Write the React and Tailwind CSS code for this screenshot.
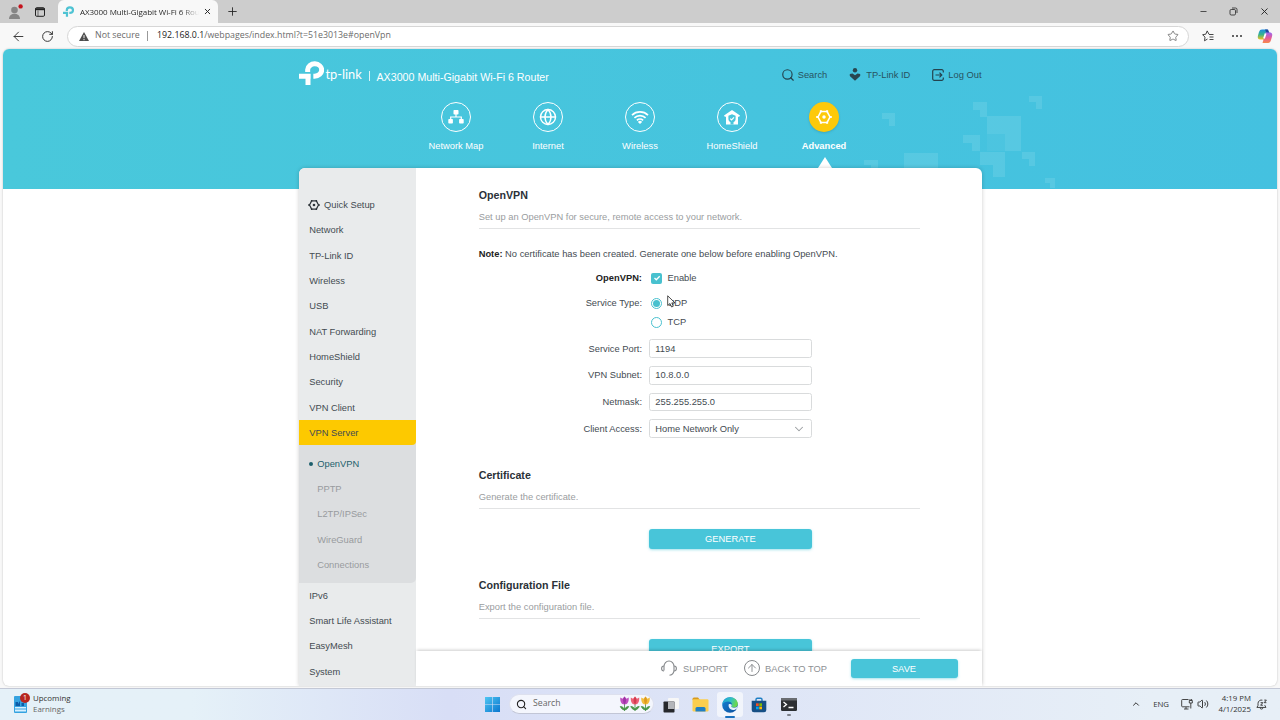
import {
  ArrowLeft,
  ArrowUp,
  ChevronDown,
  ChevronUp,
  Globe,
  Minus,
  Plus,
  RotateCw,
  Search,
  Star,
  Volume2,
  X,
} from 'lucide-react'

const SIDEBAR_TOP = [
  'Network',
  'TP-Link ID',
  'Wireless',
  'USB',
  'NAT Forwarding',
  'HomeShield',
  'Security',
  'VPN Client',
]
const VPN_PAGES = ['OpenVPN', 'PPTP', 'L2TP/IPSec', 'WireGuard', 'Connections']
const SIDEBAR_BOTTOM = ['IPv6', 'Smart Life Assistant', 'EasyMesh', 'System']

function TpMark({ className }) {
  return (
    <svg viewBox="0 0 75 72" className={className} fill="none" stroke="currentColor">
      <path d="M26 33V26a21 18.500 0 1 1 21 19.500H43" strokeWidth="15" />
      <path d="M0 46H35M27 39V72" strokeWidth="15" />
    </svg>
  )
}

function GearIcon({ className }) {
  return (
    <svg viewBox="0 0 24 24" className={className} fill="none" stroke="currentColor">
      <path d="M7.300 3.800H16.700L21 12L16.700 20.200H7.300L3 12Z" strokeWidth="2.400" strokeLinejoin="round" />
      <path d="M7.300 1.800V5M16.700 1.800V5M7.300 22.200V19M16.700 22.200V19M0.300 12H4M20 12H23.700" strokeWidth="3" />
      <circle cx="12" cy="12" r="2.600" fill="currentColor" stroke="none" />
    </svg>
  )
}

function NetworkMapIcon() {
  return (
    <svg viewBox="0 0 16 14" className="w-4 h-3.5" fill="currentColor">
      <rect x="5.500" y="0" width="5" height="4.500" rx="0.800" />
      <rect x="0.300" y="9" width="4.600" height="4.500" rx="0.800" />
      <rect x="11.100" y="9" width="4.600" height="4.500" rx="0.800" />
      <path d="M8 4v3M2.700 10V7h10.600v3" fill="none" stroke="currentColor" strokeWidth="1.200" />
    </svg>
  )
}

function WifiIcon() {
  return (
    <svg viewBox="0 0 18 14" className="w-[18px] h-3.5" fill="none" stroke="currentColor" strokeWidth="1.700">
      <path d="M1 5.200a11.500 11.500 0 0 1 16 0M3.400 7.900a8 8 0 0 1 11.200 0M5.900 10.400a4.500 4.500 0 0 1 6.200 0" />
      <path d="M6.900 11.900a3 3 0 0 1 4.200 0L9 14Z" fill="currentColor" stroke="none" />
    </svg>
  )
}

function HomeShieldIcon() {
  return (
    <svg viewBox="0 0 16 15" className="w-4 h-[15px]">
      <path d="M8 0L16 5.500L15 7L14 6.400V14.500H2V6.400L1 7L0 5.500Z" fill="currentColor" />
      <path d="M8 4.300L11.600 5.700V9C11.600 10.800 10.500 11.700 9.500 12.200V14.500H6.500V12.200C5.500 11.700 4.400 10.800 4.400 9V5.700Z" fill="#49c6dc" />
      <path d="M6.200 8.600L7.600 10L10 7.400" fill="none" stroke="currentColor" strokeWidth="1.200" />
    </svg>
  )
}

const NAV = [
  { label: 'Network Map', icon: <NetworkMapIcon /> },
  { label: 'Internet', icon: <Globe className="size-[18px]" strokeWidth={1.9} /> },
  { label: 'Wireless', icon: <WifiIcon /> },
  { label: 'HomeShield', icon: <HomeShieldIcon /> },
  { label: 'Advanced', icon: <GearIcon className="size-[16px]" />, active: true },
]

function TabStrip() {
  return (
    <div className="flex h-[23px] bg-[#cdcdcd] text-[#222]">
      <div className="w-[58px] flex items-center pl-2 gap-[11px]">
        <svg viewBox="0 0 16 16" className="size-4">
          <circle cx="6.500" cy="6" r="3.300" fill="#858585" />
          <path d="M1 15c0-7 11-7 11 0z" fill="#858585" />
          <circle cx="12.600" cy="2.400" r="2.200" fill="#c5121c" />
        </svg>
        <svg viewBox="0 0 10 10" className="size-[10px]" fill="none" stroke="#222">
          <rect x="0.500" y="0.700" width="9" height="8.600" rx="1.200" />
          <path d="M0.500 2.200h9" strokeWidth="2" />
          <path d="M3 3.500v5.500" strokeWidth="0.600" />
        </svg>
      </div>
      <div className="w-[160px] rounded-t-[6px] bg-[#f8f8f8] flex items-center pl-[5px]">
        <TpMark className="w-[11px] h-[11px] text-[#4fc3d3]" />
        <span className="ml-[6px] w-[119px] overflow-hidden whitespace-nowrap font-['Open_Sans',sans-serif] text-[8px] tracking-[-0.060px] bg-linear-to-r from-[#222] from-85% to-transparent bg-clip-text text-transparent">
          AX3000 Multi-Gigabit Wi-Fi 6 Rou
        </span>
        <X className="size-[9px] ml-1" strokeWidth={2.5} />
      </div>
      <Plus className="size-[13px] ml-[8px] mt-[5px]" strokeWidth={1.6} />
      <div className="ml-auto flex items-center gap-[21px] pr-[10px]">
        <Minus className="size-[9px]" />
        <svg viewBox="0 0 9 9" className="size-[9px]" fill="none" stroke="#222" strokeWidth="0.800">
          <rect x="1" y="2.500" width="5.500" height="5.500" rx="1.200" />
          <path d="M3 1h3.500a1.500 1.500 0 0 1 1.500 1.500V6" />
        </svg>
        <X className="size-[11px]" strokeWidth={2} />
      </div>
    </div>
  )
}

function CopilotIcon() {
  return (
    <svg viewBox="0 0 16 16" className="size-4">
      <defs>
        <linearGradient id="cpA" x1="0" y1="0" x2="0" y2="1">
          <stop offset="0" stopColor="#1c8fe0" />
          <stop offset="0.500" stopColor="#36b38f" />
          <stop offset="1" stopColor="#f3c11b" />
        </linearGradient>
        <linearGradient id="cpB" x1="0" y1="0" x2="0" y2="1">
          <stop offset="0" stopColor="#9a66f0" />
          <stop offset="0.500" stopColor="#e45a9b" />
          <stop offset="1" stopColor="#f7894a" />
        </linearGradient>
      </defs>
      <path d="M5 1.500h5.500L8 11.500H3.500c-2.500 0-3.200-1.500-2.500-4l1-3.500C2.500 2.300 3.500 1.500 5 1.500z" fill="url(#cpA)" />
      <path d="M8 1.500h3l1.500 3.500H9.500z" fill="#23459c" />
      <path d="M11 15H5.500L8.500 4.500h4c2.500 0 3.200 1.500 2.500 4l-1 3.500c-.5 2-1.500 3-3 3z" fill="url(#cpB)" />
      <path d="M8.600 5.500L7 10.500" stroke="#fff" strokeWidth="1.800" />
    </svg>
  )
}

function AddressBar() {
  return (
    <div className="flex items-center h-[26px] bg-[#f8f8f8] text-[#333]">
      <ArrowLeft className="size-[15px] ml-[11px]" strokeWidth={1.5} />
      <RotateCw className="size-[13px] ml-[15px]" strokeWidth={1.8} />
      <div className="ml-[13px] w-[1122px] h-[21px] rounded-full border border-[#d6d6d6] bg-white flex items-center pl-[10px] pr-[9px] whitespace-nowrap font-['Open_Sans',sans-serif] text-[8.820px] text-[#6b6b6b]">
        <svg viewBox="0 0 12 11" className="w-3 h-[11px]">
          <path d="M6 1L11 10H1Z" fill="#4d4d4d" />
          <path d="M6 4v3.200M6 8v1.200" stroke="#fff" strokeWidth="0.900" />
        </svg>
        <span className="ml-[5px] w-[45px]">Not secure</span>
        <span className="w-px h-[10px] bg-[#999] ml-[7px] mr-[9px]" />
        <span>
          <span className="text-[#222]">192.168.0.1</span>/webpages/index.html?t=51e3013e#openVpn
        </span>
        <Star className="size-3 ml-auto text-[#777]" strokeWidth={1.8} />
      </div>
      <svg viewBox="0 0 12 12" className="size-3 ml-[13px]" fill="none" stroke="#333" strokeWidth="0.900">
        <path d="M7 4.300L5.200 0.900L3.800 4.200L0.600 4.700L3 7.100L2.500 10.800L5.500 9M7 4.500H11.500M7.500 7H11.500M7.500 9.500H11.500" />
      </svg>
      <span className="flex gap-[2.500px] ml-[18px]">
        <i className="size-[1.500px] bg-[#333] rounded-full" />
        <i className="size-[1.500px] bg-[#333] rounded-full" />
        <i className="size-[1.500px] bg-[#333] rounded-full" />
      </span>
      <span className="ml-[15px]">
        <CopilotIcon />
      </span>
    </div>
  )
}

function HeaderPattern() {
  return (
    <svg viewBox="860 90 200 99" className="absolute left-[857px] top-[41px] w-[200px] h-[99px]" fill="#fff">
      <g fillOpacity="0.100">
        <path d="M1029 96h13v13h-6v-7h-7zM973 102h14v15h-7v-7h-7zM882 113h13v13h-6v-7h-7z" />
        <path d="M987 116h34v35h-16v-17h-18zM963 135h17v16h-8v-8h-9zM980 152h25v25h-12v-12h-13z" />
        <path d="M1022 152h13v14h-6v-7h-7zM1045 178h10v10h-5v-5h-5zM904 153h34v16h-34zM864 160h14v9h-7v-4h-7z" />
      </g>
      <path d="M987 134h18v17h-18z" fillOpacity="0.040" />
    </svg>
  )
}

function RouterHeader() {
  return (
    <header className="relative h-[140px] bg-linear-to-r from-[#49c8db] to-[#44c1e0]">
      <HeaderPattern />
      <div className="w-[683px] ml-[295.500px] relative">
        <div className="flex items-center h-[50px]">
          <TpMark className="w-[25px] h-6 text-white -mt-[2px]" />
          <span className="ml-[2px] w-[37px] text-[12.800px] text-white font-[Lato,sans-serif] whitespace-nowrap mt-px">tp-link</span>
          <span className="w-px h-[10px] bg-white/80 ml-[6px] mt-1" />
          <span className="ml-[7px] mt-[5px] text-white text-[10.670px] whitespace-nowrap">AX3000 Multi-Gigabit Wi-Fi 6 Router</span>
          <div className="ml-auto mt-[2px] flex items-center text-[9.330px] text-[#28535f]">
            <Search className="size-[14px] text-[#24434e]" strokeWidth={2} />
            <span className="ml-[3px] mt-px">Search</span>
            <svg viewBox="0 0 12 13" className="w-3 h-[13px] ml-[22px]" fill="#28464f">
              <circle cx="6" cy="2.300" r="2.200" />
              <path d="M0.800 6L3.500 5.500L6 7.300L8.500 5.500L11.200 6V8L6 12.800L0.800 8Z" />
            </svg>
            <span className="ml-[5px] mt-px">TP-Link ID</span>
            <svg viewBox="0 0 12 12" className="size-3 ml-[22px]" fill="none" stroke="#24434e" strokeWidth="1.200">
              <path d="M11.300 3.500V2.200A1.500 1.500 0 0 0 9.800 0.700H2.200A1.500 1.500 0 0 0 0.700 2.200V9.800A1.500 1.500 0 0 0 2.200 11.300H9.800A1.500 1.500 0 0 0 11.300 9.800V8.500M3.500 6H9.500M7.500 3.700L9.800 6L7.500 8.300" />
            </svg>
            <span className="ml-[4px] mt-px">Log Out</span>
          </div>
        </div>
        <nav className="flex pl-[111.500px] text-[9.330px] text-white">
          {NAV.map((item) => (
            <div key={item.label} className="w-[92px] flex flex-col items-center pt-[3px]">
              <div
                className={
                  item.active
                    ? 'size-[30px] rounded-full bg-[#fdc90a] flex items-center justify-center shadow-sm'
                    : 'size-[30px] rounded-full border-[1.500px] border-white flex items-center justify-center'
                }
              >
                {item.icon}
              </div>
              <span className={item.active ? 'mt-[7px] leading-[14px] font-bold' : 'mt-[7px] leading-[14px]'}>{item.label}</span>
              {item.active && <span className="mt-[4px] ml-px border-x-[7px] border-b-[11px] border-x-transparent border-b-white" />}
            </div>
          ))}
        </nav>
      </div>
    </header>
  )
}

function Sidebar() {
  return (
    <aside className="w-[117.500px] shrink-0 bg-[#e9ebec] pt-6 rounded-tl-[6px] text-[9.330px] leading-[14px] text-[#444b52]">
      <div className="h-[25.330px] flex items-center pl-[9px] pt-px">
        <GearIcon className="size-[12px] text-[#2c3338]" />
        <span className="ml-[4.500px]">Quick Setup</span>
      </div>
      {SIDEBAR_TOP.map((label) => (
        <div key={label} className="h-[25.330px] flex items-center pl-[10.700px] pt-px">{label}</div>
      ))}
      <div className="bg-[#dcdee0] rounded-br-[5px]">
        <div className="h-[25.330px] flex items-center pl-[10.700px] pt-px bg-[#fdc900] rounded-br-[4px]">VPN Server</div>
        <div className="py-[5.330px]">
          {VPN_PAGES.map((label, i) => (
            <div
              key={label}
              className={
                i === 0
                  ? 'h-[25.330px] flex items-center pl-[10.700px] pt-px text-[#1d5f6c]'
                  : 'h-[25.330px] flex items-center pl-[18.700px] pt-px text-[#989b9e]'
              }
            >
              {i === 0 && <span className="size-1 rounded-full bg-[#1d5f6c] mr-1" />}
              {label}
            </div>
          ))}
        </div>
      </div>
      {SIDEBAR_BOTTOM.map((label) => (
        <div key={label} className="h-[25.330px] flex items-center pl-[10.700px] pt-px">{label}</div>
      ))}
    </aside>
  )
}

function SectionHead({ title, text }) {
  return (
    <div className="border-b border-[#e2e3e4] pb-1">
      <h3 className="text-[10.670px] leading-4 font-bold text-[#2b3138]">{title}</h3>
      <p className="mt-[7px] leading-[14px] text-[#9a9da0]">{text}</p>
    </div>
  )
}

function Row({ label, bold, children }) {
  return (
    <div className="flex items-center">
      <span className={bold ? 'w-[163.300px] text-right font-bold text-[#222]' : 'w-[163.300px] text-right'}>{label}</span>
      <div className="ml-[6.700px] flex items-center">{children}</div>
    </div>
  )
}

function Field({ value, select }) {
  return (
    <div className="w-[163.300px] h-[18.670px] rounded-[2.500px] border border-[#d9dbdc] flex items-center justify-between pl-[5.700px] pr-[5px]">
      {value}
      {select && <ChevronDown className="size-[14px] text-[#9a9da0]" strokeWidth={1.8} />}
    </div>
  )
}

function ActionButton({ children }) {
  return (
    <div className="ml-[170px] w-[163.300px] h-[19.330px] rounded-[3px] bg-[#48c5d9] text-white flex items-center justify-center shadow-sm shadow-[#48c5d9]/40">
      {children}
    </div>
  )
}

function OpenVpnPage() {
  return (
    <main className="flex-1 h-[482.500px] overflow-hidden pl-[62.700px] pr-[61.500px] pt-[19px] text-[9.330px] leading-[14px] text-[#444b52]">
      <SectionHead title="OpenVPN" text="Set up an OpenVPN for secure, remote access to your network." />
      <p className="mt-[18px] whitespace-nowrap">
        <b className="text-[#222]">Note:</b> No certificate has been created. Generate one below before enabling OpenVPN.
      </p>

      <div className="mt-[10px] h-[14px]">
        <Row label="OpenVPN:" bold>
          <span className="ml-[2.500px] size-[11px] rounded-[2px] bg-[#48c1cf] flex items-center justify-center">
            <svg viewBox="0 0 8 8" className="size-2" fill="none" stroke="#fff" strokeWidth="1.300">
              <path d="M1.500 4L3.300 5.800L6.700 2.300" />
            </svg>
          </span>
          <span className="ml-[5.300px]">Enable</span>
        </Row>
      </div>
      <div className="mt-[11px] h-[14px]">
        <Row label="Service Type:">
          <span className="ml-[2.500px] size-[11px] rounded-full border border-[#48c1cf] flex items-center justify-center">
            <span className="size-[7px] rounded-full bg-[#48c1cf]" />
          </span>
          <span className="ml-[5.300px]">UDP</span>
        </Row>
      </div>
      <div className="mt-[5.400px] h-[14px]">
        <Row label="">
          <span className="ml-[2.500px] size-[11px] rounded-full border border-[#48c1cf]" />
          <span className="ml-[5.300px]">TCP</span>
        </Row>
      </div>

      <div className="mt-[9.900px] flex flex-col gap-2">
        <Row label="Service Port:">
          <Field value="1194" />
        </Row>
        <Row label="VPN Subnet:">
          <Field value="10.8.0.0" />
        </Row>
        <Row label="Netmask:">
          <Field value="255.255.255.0" />
        </Row>
        <Row label="Client Access:">
          <Field value="Home Network Only" select />
        </Row>
      </div>

      <div className="mt-[29.300px] mb-5">
        <SectionHead title="Certificate" text="Generate the certificate." />
      </div>
      <ActionButton>GENERATE</ActionButton>

      <div className="mt-[28.700px] mb-5">
        <SectionHead title="Configuration File" text="Export the configuration file." />
      </div>
      <ActionButton>EXPORT</ActionButton>
    </main>
  )
}

function PageFooter() {
  return (
    <div className="relative h-[34.500px] bg-white flex items-center justify-end pr-6 text-[9.330px] leading-[14px] text-[#8e9194] shadow-[0_-2px_3px_-1px_rgba(0,0,0,0.2)]">
      <svg viewBox="0 0 16 16" className="size-4" fill="none" stroke="#85888b" strokeWidth="1.100">
        <path d="M3 10.500V6.500A5 5.500 0 0 1 13 6.500V10C13 13 11.500 14.800 8.500 15.300" />
        <path d="M3 6C1.500 6 0.600 7 0.600 8.500S1.500 11 3 11M13 6C14.500 6 15.400 7 15.400 8.500S14.500 11 13 11" />
      </svg>
      <span className="ml-[6px] mt-px">SUPPORT</span>
      <span className="size-4 rounded-full border border-[#85888b] ml-4 mr-[5px] flex items-center justify-center">
        <ArrowUp className="size-3 shrink-0" strokeWidth={2} />
      </span>
      <span className="mt-px">BACK TO TOP</span>
      <div className="ml-[23.500px] w-[107px] h-[19.300px] pt-px rounded-[3px] bg-[#48c5d9] text-white flex items-center justify-center shadow-sm shadow-[#48c5d9]/40">
        SAVE
      </div>
    </div>
  )
}

function Tulip({ x, fill, dark }) {
  return (
    <g transform={`translate(${x} 0)`}>
      <path d="M5 7V15M5 14C2.500 13.500 1.500 12 0.800 10.500C3 10.500 4.700 12 5 14C5.300 12 7 10.500 9.200 10.500C8.500 12 7.500 13.500 5 14Z" stroke="#3f8d3d" strokeWidth="0.800" fill="#4fa04a" />
      <path d="M0.800 1.500L3 2.700L5 0.500L7 2.700L9.200 1.500C9.500 5 8.500 8.500 5 8.500S0.500 5 0.800 1.500Z" fill={fill} />
      <path d="M5 0.500C7 3 7 6 5 8.500C3 6 3 3 5 0.500Z" fill={dark} />
    </g>
  )
}

function Taskbar() {
  return (
    <div className="flex items-center h-8 border-t border-[#c3c8d6] bg-linear-to-r from-[#e5f1f8] from-15% via-[#d8def6] via-35% to-[#e7eff7] to-90% font-['Open_Sans',sans-serif] text-[#333]">
      <div className="w-[485px] flex items-center pl-[14px]">
        <div className="relative">
          <svg viewBox="0 0 13 17" className="w-[13px] h-[17px]">
            <rect width="13" height="17" rx="1" fill="#35a3e0" />
            <path d="M1.500 10V6H4V8L6 5V10M7.500 10V7H10V10" fill="#0b5ca8" />
            <path d="M1 11h11v1.500H1zM1 13.500h11v2H1z" fill="#d8f1ff" />
          </svg>
          <span className="absolute left-[6px] -top-[3px] size-[10px] rounded-full bg-[#b7261f] text-white text-[7px] leading-[10px] text-center">1</span>
        </div>
        <div className="ml-[6px] text-[7.900px] leading-[11px] pb-[2px]">
          <div>Upcoming</div>
          <div className="text-[#666]">Earnings</div>
        </div>
      </div>

      <svg viewBox="0 0 15 15" className="size-[15px]">
        <defs>
          <linearGradient id="win" x1="0" y1="0" x2="1" y2="1">
            <stop offset="0" stopColor="#4fc6f2" />
            <stop offset="1" stopColor="#0a76cf" />
          </linearGradient>
        </defs>
        <path d="M0 0h7.200v7.200H0zM7.800 0H15v7.200H7.800zM0 7.800h7.200V15H0zM7.800 7.800H15V15H7.800z" fill="url(#win)" />
      </svg>
      <div className="ml-[9px] -mt-px w-[145px] h-[20px] rounded-full bg-[#f4f6fd] border border-[#dde0ee] border-b-[#c2c6d6] flex items-center pl-[6px] pr-[2px] text-[8.700px] text-[#666]">
        <Search className="size-[11px] text-[#222]" strokeWidth={2.4} />
        <span className="ml-[6px]">Search</span>
        <svg viewBox="0 0 32 16" className="w-8 h-4 ml-auto">
          <Tulip x={0.5} fill="#c14fc0" dark="#9c35a5" />
          <Tulip x={11} fill="#ef6076" dark="#d23c50" />
          <Tulip x={21.500} fill="#f3bd3b" dark="#dd9a1f" />
        </svg>
      </div>
      <svg viewBox="0 0 16 16" className="size-4 ml-[9px]">
        <rect x="5" y="1" width="11" height="11" rx="1" fill="#f7f7f7" />
        <rect x="0.500" y="4.500" width="11" height="11" rx="0.800" fill="#26282c" />
        <rect x="5" y="4.500" width="6.500" height="7.500" fill="#b4b6ba" />
      </svg>
      <svg viewBox="0 0 17 15" className="w-[17px] h-[15px] ml-[13px] -mt-px">
        <path d="M0.500 2a1.500 1.500 0 0 1 1.500-1.500H6L8 3H0.500z" fill="#d89a1c" />
        <rect x="0.500" y="2.300" width="16" height="12.200" rx="1.200" fill="#fbce4f" />
        <path d="M3.500 14.500V11.500a1.500 1.500 0 0 1 1.500-1.500h7a1.500 1.500 0 0 1 1.500 1.500v3z" fill="#1f7fc4" />
      </svg>
      <div className="ml-[8px] relative w-[26px] h-[25px] rounded-[3px] bg-white/60 flex items-center justify-center">
        <svg viewBox="0 0 16 16" className="size-4">
          <defs>
            <linearGradient id="edgeTop" x1="0" y1="0" x2="1" y2="0.300">
              <stop offset="0" stopColor="#1d9fdc" />
              <stop offset="0.600" stopColor="#33c1c0" />
              <stop offset="1" stopColor="#6bd84d" />
            </linearGradient>
            <linearGradient id="edgeLow" x1="0" y1="0" x2="1" y2="1">
              <stop offset="0" stopColor="#1585d8" />
              <stop offset="1" stopColor="#0c4d9b" />
            </linearGradient>
          </defs>
          <circle cx="8" cy="8" r="7.800" fill="url(#edgeLow)" />
          <path d="M0.300 7.500C0.800 3 4 0.200 8 0.200C12.700 0.200 15.800 3.500 15.800 6.800C15.800 9.300 14 10.600 12 10.600C10.200 10.600 9.300 10 9.300 9.500C9.300 9.100 10 8.700 10 7.500C10 5.800 8.200 4.500 6 4.500C3.500 4.500 1.300 5.700 0.300 7.500Z" fill="url(#edgeTop)" />
          <path d="M6.800 7.300C6 9.500 7.500 12.800 11 13C12.800 13 14 12.300 15 11.500L16 8.500C15.200 10 13.700 10.700 12 10.700C10.200 10.700 9.300 10 9.300 9.500C9.300 9.100 9.800 8.700 9.800 7.700C9 6.800 7.500 6.600 6.800 7.300Z" fill="#e7f1fb" />
        </svg>
        <span className="absolute left-[8px] -bottom-px w-[10px] h-[2px] rounded-full bg-[#1a70bd]" />
      </div>
      <svg viewBox="0 0 16 16" className="size-4 ml-2">
        <path d="M5 4V2.500A1.300 1.300 0 0 1 6.300 1.200H9.700A1.300 1.300 0 0 1 11 2.500V4" fill="none" stroke="#1f7fc4" strokeWidth="1.400" />
        <path d="M0.700 3.700H15.300V13a2.300 2.300 0 0 1-2.300 2.300H3A2.300 2.300 0 0 1 0.700 13z" fill="#174f85" />
        <path d="M5 6.300h2.700V9H5z" fill="#f25022" />
        <path d="M8.300 6.300H11V9H8.300z" fill="#7fba00" />
        <path d="M5 9.600h2.700v2.700H5z" fill="#00a4ef" />
        <path d="M8.300 9.600H11v2.700H8.300z" fill="#ffb900" />
      </svg>
      <div className="ml-[14px] relative">
        <svg viewBox="0 0 16 13" className="w-4 h-[13px]">
          <rect width="16" height="13" rx="1.200" fill="#2d3033" />
          <path d="M0 1.200A1.200 1.200 0 0 1 1.200 0H14.800A1.200 1.200 0 0 1 16 1.200V2.500H0z" fill="#6a6d71" />
          <path d="M2.500 4L5.500 6.500L2.500 9M7.500 9.500H12.500" fill="none" stroke="#fff" strokeWidth="1.300" />
        </svg>
        <span className="absolute left-[6px] -bottom-[5px] w-1 h-[2px] rounded-full bg-[#7d818a]" />
      </div>

      <div className="ml-auto -mt-px flex items-center text-[7.800px] pr-[13px]">
        <ChevronUp className="size-[10px]" strokeWidth={2.4} />
        <span className="ml-[12px] mt-px">ENG</span>
        <svg viewBox="0 0 12 12" className="size-3 ml-[12px]" fill="none" stroke="#333" strokeWidth="0.900">
          <path d="M7.500 1.500H1.500A0.800 0.800 0 0 0 0.700 2.300V8A0.800 0.800 0 0 0 1.500 8.800H8.500M3 11H7.500M5 9V11" />
          <path d="M8.300 2.500H11.300V5H8.300zM9.800 5V10.500M9 1V2.500M10.600 1V2.500" />
        </svg>
        <Volume2 className="size-3 ml-1" strokeWidth={1.9} />
        <div className="ml-[8px] w-[34px] leading-[11px] whitespace-nowrap flex flex-col items-end">
          <div>4:19 PM</div>
          <div>4/1/2025</div>
        </div>
        <svg viewBox="0 0 12 12" className="size-[11px] ml-[5px]" fill="none" stroke="#333" strokeWidth="1">
          <path d="M7 1.300A3.700 3.700 0 0 0 2.200 4.800V7L1 9.200H10.800L9.700 7V6.500M4.500 9.500a1.500 1.500 0 0 0 3 0M5 4H7.500L5 6.800H7.500M9 1.200H11.300L9 4H11.300" />
        </svg>
      </div>
    </div>
  )
}

export default function App() {
  return (
    <div className="relative w-[1280px] h-[720px] overflow-hidden bg-[#f8f8f8] flex flex-col font-['Liberation_Sans',Arial,sans-serif]">
      <TabStrip />
      <AddressBar />
      <div className="mx-[3px] h-[636.500px] shrink-0 rounded-[6px] overflow-hidden bg-white shadow-[0_0_2px_rgba(0,0,0,0.25)]">
        <RouterHeader />
        <div className="relative -mt-[21px] w-[683px] h-[517.500px] ml-[295.500px] rounded-t-[6px] bg-white flex shadow-[0_0_4px_rgba(0,0,0,0.2)]">
          <Sidebar />
          <div className="flex-1 flex flex-col min-w-0">
            <OpenVpnPage />
            <PageFooter />
          </div>
        </div>
      </div>
      <div className="mt-auto">
        <Taskbar />
      </div>

      {/* mouse pointer */}
      <svg viewBox="0 0 9 13" className="absolute left-[667px] top-[295px] w-[9px] h-[13px]">
        <path d="M0.700 0.800V10.500L3 8.500L4.600 12L6.300 11.200L4.800 7.900H8Z" fill="#fff" stroke="#222" strokeWidth="0.800" />
      </svg>
    </div>
  )
}
